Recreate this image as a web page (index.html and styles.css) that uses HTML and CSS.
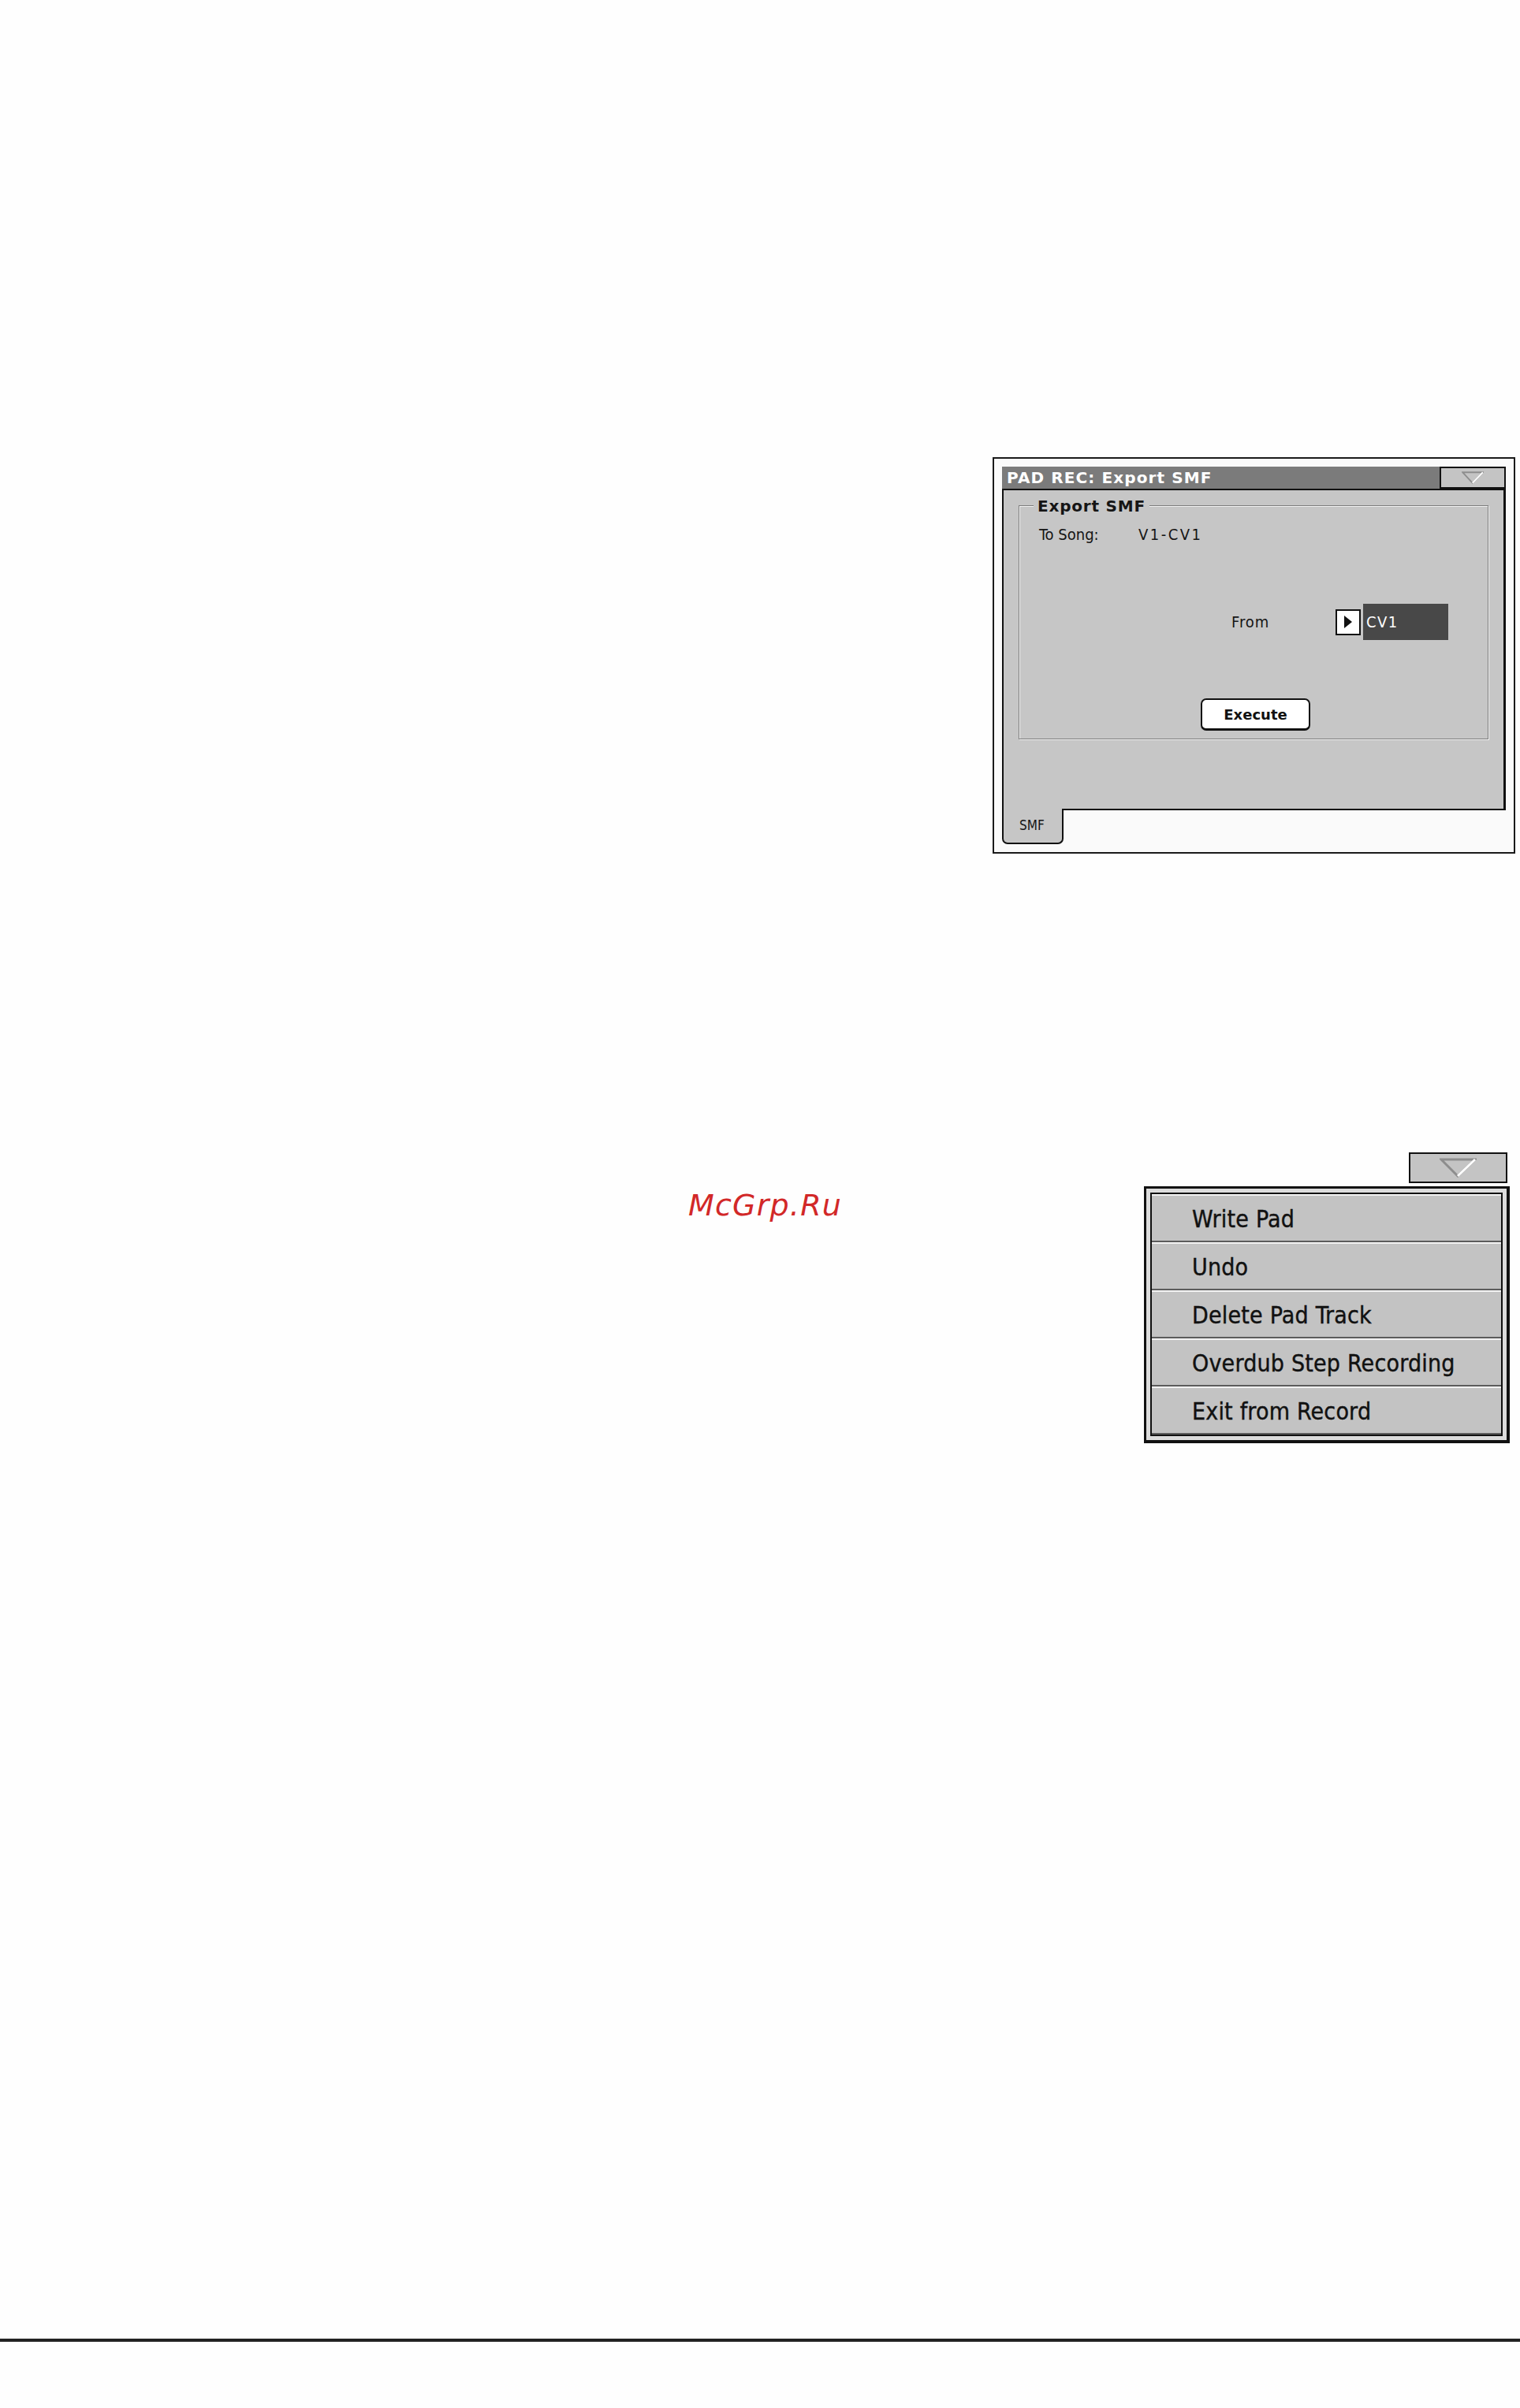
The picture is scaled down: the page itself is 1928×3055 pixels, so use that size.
FILE: index.html
```html
<!DOCTYPE html>
<html lang="en">
  <head>
    <meta charset="UTF-8" />
    <meta name="viewport" content="width=device-width, initial-scale=1.0" />
    <title>Pad Record - Export SMF</title>
    <link rel="stylesheet" href="styles.css">
  </head>
  <body>
    <div class="page">

      <!-- Export SMF page of the Pad Record mode -->
      <section class="win">
        <div class="win-head">
          <div class="win-title">PAD REC: Export SMF</div>
          <div class="menu-btn title-btn">
            <svg class="tri" viewBox="0 0 47 25" preserveAspectRatio="none">
              <path d="M2 2 H45 L23 23 Z" fill="none" stroke="#8d8d8d" stroke-width="3" />
              <path d="M45 2 L23 23" fill="none" stroke="#fff" stroke-width="3" />
            </svg>
          </div>
        </div>

        <div class="win-body">
          <div class="group">
            <div class="group-title">Export SMF</div>

            <div class="param-row">
              <span class="param-label">To Song:</span>
              <span class="param-value">V1-CV1</span>
            </div>

            <div class="from-row">
              <span class="from-label">From</span>
              <span class="pick-arrow">
                <svg viewBox="0 0 12 16" width="12" height="16"><path d="M1 0 L11 8 L1 16 Z" fill="#111" /></svg>
              </span>
              <span class="pick-field">CV1</span>
            </div>

            <button class="exec-btn">Execute</button>
          </div>
        </div>

        <div class="tab-strip">
          <div class="tab">SMF</div>
        </div>
      </section>

      <section class="menu-row">
        <div class="watermark">McGrp.Ru</div>

        <div class="popup">
          <div class="menu-btn popup-btn">
            <svg class="tri tri-big" viewBox="0 0 47 25" preserveAspectRatio="none">
              <path d="M2 2 H45 L23 23 Z" fill="none" stroke="#8d8d8d" stroke-width="3" />
              <path d="M45 2 L23 23" fill="none" stroke="#fff" stroke-width="3" />
            </svg>
          </div>
          <div class="popup-frame">
            <ul class="popup-list">
              <li class="popup-item">Write Pad</li>
              <li class="popup-item">Undo</li>
              <li class="popup-item">Delete Pad Track</li>
              <li class="popup-item">Overdub Step Recording</li>
              <li class="popup-item">Exit from Record</li>
            </ul>
          </div>
        </div>
      </section>

      <hr class="page-rule">
    </div>
  </body>
</html>
```

FILE: styles.css
```css
* {
  box-sizing: border-box;
  padding: 0;
  margin: 0;
}

body {
  background: #fefefe;
  color: #151515;
  font-family: "DejaVu Sans Condensed", "DejaVu Sans", sans-serif;
}

.page {
  width: 1928px;
  min-height: 3055px;
  display: flex;
  flex-direction: column;
}

/* ---------- dialog window ---------- */

.win {
  width: 663px;
  margin: 580px 6px 0 auto;
  border: 2px solid #1a1a1a;
  background: #fafafa;
  padding: 10px 10px 10px 10px;
  display: flex;
  flex-direction: column;
}

.win-head {
  display: flex;
  height: 28px;
}

.win-title {
  flex: 1;
  background: #7b7b7b;
  color: #fff;
  font-family: "DejaVu Sans", sans-serif;
  font-weight: bold;
  font-size: 20px;
  letter-spacing: 1.1px;
  line-height: 28px;
  padding-left: 6px;
  white-space: nowrap;
}

.menu-btn {
  display: flex;
  align-items: center;
  justify-content: center;
  border: 2px solid #111;
  background: #c4c4c4;
}

.title-btn {
  width: 84px;
  height: 28px;
}

.tri {
  width: 28px;
  height: 16px;
  display: block;
}

.tri-big {
  width: 47px;
  height: 25px;
}

.win-body {
  height: 408px;
  border: 2px solid #111;
  border-right-width: 3px;
  background: #c6c6c6;
  padding: 19px 19px 0 19px;
}

.group {
  position: relative;
  height: 297px;
  border: 1px solid #7d7d7d;
  box-shadow: inset 1px 1px 0 #f2f2f2, 1px 1px 0 #f2f2f2;
  padding: 25px 0 0 25px;
}

.group-title {
  position: absolute;
  top: -12px;
  left: 18px;
  padding: 0 5px;
  background: #c6c6c6;
  font-family: "DejaVu Sans", sans-serif;
  font-weight: bold;
  font-size: 20px;
  line-height: 24px;
  letter-spacing: 0.8px;
}

.param-row {
  display: flex;
  font-size: 20px;
  line-height: 22px;
}

.param-label {
  width: 126px;
}

.param-value {
  letter-spacing: 2.5px;
}

.from-row {
  display: flex;
  align-items: center;
  margin: 77px 0 0 244px;
  font-size: 20px;
}

.from-label {
  width: 132px;
  letter-spacing: 1px;
}

.pick-arrow {
  width: 32px;
  height: 33px;
  border: 2px solid #111;
  background: #fff;
  display: flex;
  align-items: center;
  justify-content: center;
  margin-right: 3px;
}

.pick-field {
  width: 108px;
  height: 46px;
  background: #484848;
  color: #fff;
  line-height: 46px;
  padding-left: 4px;
  letter-spacing: 1.5px;
}

.exec-btn {
  display: block;
  width: 139px;
  height: 41px;
  margin: 74px 0 0 205px;
  background: #fff;
  border: 2px solid #111;
  border-bottom-width: 3px;
  border-radius: 7px;
  font-family: "DejaVu Sans", sans-serif;
  font-weight: bold;
  font-size: 18px;
  color: #111;
}

.tab-strip {
  display: flex;
}

.tab {
  position: relative;
  width: 78px;
  height: 45px;
  margin-top: -2px;
  background: #c6c6c6;
  border: 2px solid #111;
  border-top: 0;
  border-radius: 0 0 7px 7px;
  padding-left: 20px;
  font-size: 17px;
  line-height: 43px;
}

/* ---------- popup menu ---------- */

.menu-row {
  display: flex;
  margin-top: 379px;
}

.watermark {
  margin: 48px 0 0 873px;
  font-family: "DejaVu Sans", sans-serif;
  font-style: italic;
  font-size: 38px;
  line-height: 38px;
  letter-spacing: 1.2px;
  color: #d22828;
}

.popup {
  margin-left: auto;
  margin-right: 13px;
  display: flex;
  flex-direction: column;
  align-items: flex-end;
}

.popup-btn {
  width: 125px;
  height: 39px;
  margin: 0 3px 4px 0;
}

.popup-frame {
  width: 464px;
  border: 3px solid #111;
  border-right-width: 4px;
  border-bottom-width: 4px;
  padding: 5px;
  background: #dcdcdc;
}

.popup-list {
  list-style: none;
  border: 2px solid #111;
}

.popup-item {
  height: 61px;
  background: #c3c3c3;
  border-top: 2px solid #f2f2f2;
  border-bottom: 2px solid #5c5c5c;
  padding-left: 51px;
  font-size: 30px;
  line-height: 59px;
  letter-spacing: 0.2px;
  color: #111;
  -webkit-text-stroke: 0.4px #111;
  white-space: nowrap;
}

.page-rule {
  margin: auto 0 84px 0;
  border: 0;
  height: 4px;
  background: #222;
}
```
